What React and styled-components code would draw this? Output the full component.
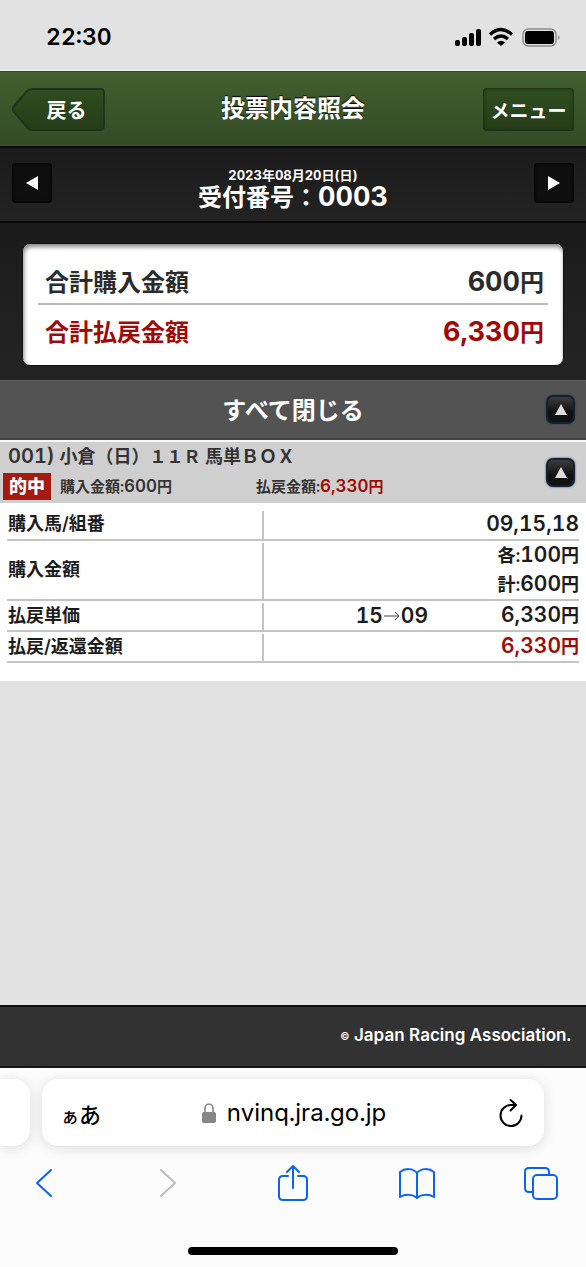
import styled, { createGlobalStyle } from "styled-components";

const results = [
    { label: "購入馬/組番", lines: [{ num: "09,15,18" }] },
    { label: "購入金額", lines: [{ before: "各:", num: "100", unit: "円" }, { before: "計:", num: "600", unit: "円" }] },
    { label: "払戻単価", combo: ["15", "09"], lines: [{ num: "6,330", unit: "円" }] },
    { label: "払戻/返還金額", lines: [{ num: "6,330", unit: "円" }], red: true },
];

export default function App() {
    return (
        <Page>
            <GlobalStyle />
            <StatusBar>
                <time>22:30</time>
                <StatusIcons />
            </StatusBar>

            <Header>
                <BackButton type="button">
                    <svg width="93" height="43" viewBox="0 0 93 43" aria-hidden="true">
                        <defs>
                            <linearGradient id="back" x1="0" y1="0" x2="0" y2="1">
                                <stop offset="0" stopColor="#2f4e20" />
                                <stop offset="1" stopColor="#243c18" />
                            </linearGradient>
                        </defs>
                        <path d="M20 1H88Q92 1 92 5V38Q92 42 88 42H20Q17 42 14 38L2 24Q0 21 2 18L14 4Q17 1 20 1Z" fill="url(#back)" stroke="#20341a" strokeWidth="2" />
                    </svg>
                    <span>戻る</span>
                </BackButton>
                <h1>投票内容照会</h1>
                <MenuButton type="button">メニュー</MenuButton>
            </Header>

            <Receipt>
                <ArrowButton type="button" aria-label="前へ">
                    <svg width="12" height="14" viewBox="0 0 12 14"><path d="M0 7L12 0V14Z" fill="#fff" /></svg>
                </ArrowButton>
                <div>
                    <small>2023年08月20日(日)</small>
                    <h2>受付番号：<Num>0003</Num></h2>
                </div>
                <ArrowButton type="button" aria-label="次へ">
                    <svg width="12" height="14" viewBox="0 0 12 14"><path d="M12 7L0 0V14Z" fill="#fff" /></svg>
                </ArrowButton>
            </Receipt>

            <Summary>
                <Card>
                    <Total>
                        <dt>合計購入金額</dt>
                        <dd><Num>600</Num>円</dd>
                    </Total>
                    <Total $red>
                        <dt>合計払戻金額</dt>
                        <dd><Num>6,330</Num>円</dd>
                    </Total>
                </Card>
            </Summary>

            <CloseAll>
                <span>すべて閉じる</span>
                <ToggleButton label="すべて閉じる" />
            </CloseAll>

            <Bet>
                <div>
                    <h3><b>001)</b> 小倉（日）<span>１１Ｒ </span>馬単ＢＯＸ</h3>
                    <BetInfo>
                        <Hit>的中</Hit>
                        <span>購入金額:<b>600</b>円</span>
                        <span>払戻金額:<em><b>6,330</b>円</em></span>
                    </BetInfo>
                </div>
                <ToggleButton label="閉じる" />
            </Bet>

            <Detail>
                <table>
                    <tbody>
                        {results.map((row) => (
                            <Row key={row.label} $red={row.red}>
                                <th scope="row">{row.label}</th>
                                <td>
                                    <Cell>
                                        {row.combo && (
                                            <Combo>
                                                {row.combo[0]}
                                                <svg width="16" height="10" viewBox="0 0 16 10" role="img" aria-label="から"><path d="M0 5H15M11 1L15 5L11 9" fill="none" stroke="#444" /></svg>
                                                {row.combo[1]}
                                            </Combo>
                                        )}
                                        <div>
                                            {row.lines.map((line) => (
                                                <p key={line.num}>{line.before}<b>{line.num}</b>{line.unit}</p>
                                            ))}
                                        </div>
                                    </Cell>
                                </td>
                            </Row>
                        ))}
                    </tbody>
                </table>
            </Detail>

            <Space />

            <Footer><small>©</small> Japan Racing Association.</Footer>

            <Browser>
                <Tabs>
                    <SideTab />
                    <AddressBar>
                        <button type="button" aria-label="表示メニュー"><i>ぁ</i>あ</button>
                        <Url href="#">
                            <svg width="14" height="20" viewBox="0 0 14 20" aria-hidden="true">
                                <path d="M3 10V5.500a4 4.500 0 0 1 8 0V10" fill="none" stroke="#85858a" strokeWidth="1.600" />
                                <rect y="9" width="14" height="11" rx="2" fill="#85858a" />
                            </svg>
                            nvinq.jra.go.jp
                        </Url>
                        <button type="button" aria-label="再読み込み">
                            <svg width="24" height="28" viewBox="0 0 24 28" fill="none" stroke="#000" strokeWidth="2" strokeLinecap="round" strokeLinejoin="round">
                                <path d="M22.500 16.500A10.500 10.500 0 1 1 12 6H17M11.500 1L17 6L11.500 11.500" />
                            </svg>
                        </button>
                    </AddressBar>
                </Tabs>
                <Tools>
                    <button type="button" aria-label="戻る">
                        <svg width="36" height="38" viewBox="0 0 36 38"><path d="M25 6L11 19L25 32" /></svg>
                    </button>
                    <button type="button" aria-label="進む" disabled>
                        <svg width="36" height="38" viewBox="0 0 36 38"><path d="M11 6L25 19L11 32" /></svg>
                    </button>
                    <button type="button" aria-label="共有">
                        <svg width="36" height="38" viewBox="0 0 36 38"><path d="M13 12H8Q4 12 4 16V32Q4 36 8 36H28Q32 36 32 32V16Q32 12 28 12H23M18 24V2M12 8L18 2L24 8" /></svg>
                    </button>
                    <button type="button" aria-label="ブックマーク">
                        <svg width="36" height="38" viewBox="0 0 36 38"><path d="M18 9C14 4 6 4 1 8V33C6 30 14 30 18 34C22 30 30 30 35 33V8C30 4 22 4 18 9V34" /></svg>
                    </button>
                    <button type="button" aria-label="タブ">
                        <svg width="36" height="38" viewBox="0 0 36 38"><path d="M9 28H6Q2 28 2 24V8Q2 4 6 4H22Q26 4 26 8V11" /><rect x="10" y="11" width="24" height="24" rx="4" /></svg>
                    </button>
                </Tools>
                <HomeBar />
            </Browser>
        </Page>
    );
}

function StatusIcons() {
    return (
        <svg width="106" height="20" viewBox="0 0 106 20" aria-hidden="true">
            <rect x="1" y="13" width="5" height="6" rx="2" />
            <rect x="8" y="10" width="5" height="9" rx="2" />
            <rect x="15" y="6" width="5" height="13" rx="2" />
            <rect x="22" y="2" width="5" height="17" rx="2" />
            <path d="M36 7.500Q47 -2.500 58 7.500M40 12Q47 6 54 12" fill="none" stroke="#000" strokeWidth="3.200" />
            <path d="M43 15.500Q47 12 51 15.500L47 19Z" />
            <rect x="69" y="2" width="33" height="17" rx="5" fill="none" stroke="#8d8d8d" strokeWidth="1.500" />
            <rect x="71" y="4" width="29" height="13" rx="3" />
            <path d="M104 8Q107 10.500 104 13Z" fill="#8d8d8d" />
        </svg>
    );
}

function ToggleButton({ label }) {
    return (
        <Toggle type="button" aria-label={label}>
            <svg width="12" height="11" viewBox="0 0 12 11"><path d="M6 0L12 11H0Z" fill="#ddd" /></svg>
        </Toggle>
    );
}

const GlobalStyle = createGlobalStyle`
    * {
        box-sizing: border-box;
    }

    body {
        margin: 0;
        background-color: #e2e2e2;
        font-family: Inter, "Noto Sans CJK JP", sans-serif;
        font-variant-numeric: tabular-nums;
    }

    h1, h2, h3, p, dl, dd {
        margin: 0;
    }

    button {
        padding: 0;
        border: none;
        background: none;
        color: inherit;
        font-family: inherit;
        cursor: pointer;
    }

    svg {
        display: block;
    }
`;

const Page = styled.div`
    min-height: 100vh;
    display: flex;
    flex-direction: column;
`;

const StatusBar = styled.div`
    height: 71px;
    padding: 4px 26px 0 46px;
    border-bottom: 1px solid #f4f4f4;
    display: flex;
    justify-content: space-between;
    align-items: center;

    time {
        font-size: 23px;
        font-weight: 600;
    }
`;

const Header = styled.header`
    height: 77px;
    padding: 0 12px;
    border-top: 1px solid #2c491d;
    border-bottom: 2px solid #0b0b0b;
    background: linear-gradient(#42602f, #334b26);
    color: #fff;
    text-shadow: 0 -1px 1px #000;
    display: grid;
    grid-template-columns: 1fr auto 1fr;
    align-items: center;

    h1 {
        font-size: 24px;
        line-height: 36px;
        font-weight: 700;
    }
`;

const BackButton = styled.button`
    display: grid;
    justify-self: start;
    align-items: center;
    font-size: 20px;
    font-weight: 700;

    svg, span {
        grid-area: 1 / 1;
    }

    span {
        padding-left: 16px;
    }
`;

const MenuButton = styled.button`
    width: 91px;
    height: 43px;
    justify-self: end;
    border-radius: 4px;
    background: linear-gradient(#2f4e20, #243c18);
    box-shadow: inset 0 0 3px 1px #1b2d13;
    font-size: 19px;
    font-weight: 700;
    white-space: nowrap;
`;

const Receipt = styled.section`
    height: 75px;
    padding: 15px 12px 0;
    border-bottom: 2px solid #090909;
    background: linear-gradient(#1b1b1b, #232323);
    color: #fff;
    text-align: center;
    display: flex;
    justify-content: space-between;
    align-items: flex-start;

    small {
        display: block;
        padding-top: 4px;
        font-size: 13px;
        line-height: 16px;
        font-weight: 700;
    }

    h2 {
        font-size: 24px;
        line-height: 28px;
        font-weight: 700;
    }
`;

const ArrowButton = styled.button`
    width: 40px;
    height: 40px;
    border-radius: 4px;
    background-color: #0f0f0f;
    box-shadow: inset 0 0 3px 1px #040404;
    display: grid;
    place-items: center;
`;

const Num = styled.span`
    font-size: 27px;
`;

const Summary = styled.section`
    padding: 20px 22px 14px;
    background: linear-gradient(#1b1b1b, #242424);
`;

const Card = styled.dl`
    padding: 20px 15px 12px;
    border: 1px solid #111;
    border-radius: 8px;
    background-color: #fff;
    box-shadow: inset 1px 3px 4px #888;
`;

const Total = styled.div`
    padding: 0 4px 2px 7px;
    color: ${(props) => (props.$red ? "#a00a04" : "#2b2b2b")};
    font-size: 24px;
    line-height: 36px;
    font-weight: 700;
    display: flex;
    justify-content: space-between;
    align-items: center;

    & + & {
        padding-top: 9px;
        border-top: 2px solid #bbb;
    }
`;

const CloseAll = styled.div`
    height: 60px;
    border-top: 1px solid #5d5d5d;
    border-bottom: 2px solid #444;
    background-color: #535353;
    color: #fff;
    font-size: 24px;
    font-weight: 700;
    display: grid;
    grid-template-columns: 1fr auto 1fr;
    align-items: center;

    span {
        padding-bottom: 3px;
        grid-column: 2;
    }
`;

const Toggle = styled.button`
    width: 29px;
    height: 29px;
    margin-right: 11px;
    justify-self: end;
    flex-shrink: 0;
    border: 2px solid #0f2138;
    border-radius: 7px;
    background: linear-gradient(#3c3c3c, #111 60%);
    box-shadow: 0 0 2px #333;
    display: grid;
    place-items: center;
`;

const Bet = styled.section`
    height: 63px;
    padding-left: 3px;
    border-top: 2px solid #f7f7f7;
    background-color: #cfcfcf;
    color: #333;
    display: flex;
    justify-content: space-between;
    align-items: center;

    h3 {
        padding-left: 5px;
        font-size: 18px;
        line-height: 28px;
        font-weight: 600;
        white-space: nowrap;
    }

    h3 b {
        font-size: 20px;
        font-weight: 600;
    }

    h3 span {
        font-size: 17px;
    }
`;

const BetInfo = styled.p`
    padding: 2px 0 4px;
    display: grid;
    grid-template-columns: 57px 196px auto;
    align-items: center;
    font-size: 15px;
    line-height: 27px;
    font-weight: 600;

    b {
        font-size: 17px;
        font-weight: 600;
    }

    em {
        color: #a00a04;
        font-style: normal;
        font-weight: 700;
    }
`;

const Hit = styled.strong`
    width: 48px;
    background-color: #a61a12;
    color: #fff;
    font-size: 18px;
    text-align: center;
`;

const Detail = styled.section`
    padding: 6px 7px 18px;
    background-color: #fff;

    table {
        width: 100%;
        border-collapse: collapse;
    }
`;

const Row = styled.tr`
    border-bottom: 2px solid #c4c4c4;
    color: #1c1c1c;

    th, td {
        height: 31px;
        padding: 0;
        font-size: 18px;
        line-height: 28px;
        font-weight: 600;
    }

    th {
        width: 45%;
        padding-left: 1px;
        background: linear-gradient(#c4c4c4, #c4c4c4) right bottom / 2px calc(100% - 2px) no-repeat;
        text-align: left;
    }

    td {
        color: ${(props) => (props.$red ? "#a00a04" : "inherit")};
    }

    b {
        font-size: 21px;
        font-weight: 600;
    }
`;

const Cell = styled.div`
    display: flex;
    justify-content: flex-end;
    gap: 73px;
    text-align: right;
`;

const Combo = styled.span`
    display: flex;
    align-items: center;
    gap: 1px;
    font-size: 21px;
`;

const Space = styled.div`
    flex: 1;
`;

const Footer = styled.footer`
    height: 63px;
    padding-right: 15px;
    border-top: 2px solid #111;
    border-bottom: 2px solid #161616;
    background-color: #323232;
    color: #fff;
    font-size: 17px;
    line-height: 57px;
    font-weight: 600;
    text-align: right;

    small {
        font-size: 10px;
        vertical-align: 1px;
    }
`;

const Browser = styled.nav`
    height: 199px;
    padding-top: 11px;
    background-color: #fcfcfc;
    overflow: hidden;
`;

const Tabs = styled.div`
    display: flex;
    gap: 12px;
    padding-right: 42px;
`;

const SideTab = styled.div`
    width: 30px;
    border-radius: 0 16px 16px 0;
    background-color: #fff;
    box-shadow: 0 2px 14px #0002;
`;

const AddressBar = styled.div`
    flex: 1;
    height: 67px;
    padding: 0 21px 0 19px;
    border-radius: 16px;
    background-color: #fff;
    box-shadow: 0 2px 14px #0002;
    display: grid;
    grid-template-columns: 1fr auto 1fr;
    align-items: center;

    button {
        justify-self: start;
        font-size: 22px;
        font-weight: 500;
    }

    button:last-child {
        justify-self: end;
    }

    i {
        font-size: 18px;
        font-style: normal;
    }
`;

const Url = styled.a`
    padding-left: 4px;
    display: flex;
    align-items: center;
    gap: 11px;
    color: #000;
    font-size: 24px;
    text-decoration: none;
`;

const Tools = styled.div`
    padding: 18px 27px 0 26px;
    display: flex;
    justify-content: space-between;

    button {
        color: #0b63f6;
    }

    button:disabled {
        color: #bcbcbc;
    }

    svg {
        fill: none;
        stroke: currentColor;
        stroke-width: 2;
        stroke-linecap: round;
        stroke-linejoin: round;
    }
`;

const HomeBar = styled.div`
    width: 36%;
    height: 8px;
    margin: 45px auto 0;
    border-radius: 4px;
    background-color: #000;
`;
